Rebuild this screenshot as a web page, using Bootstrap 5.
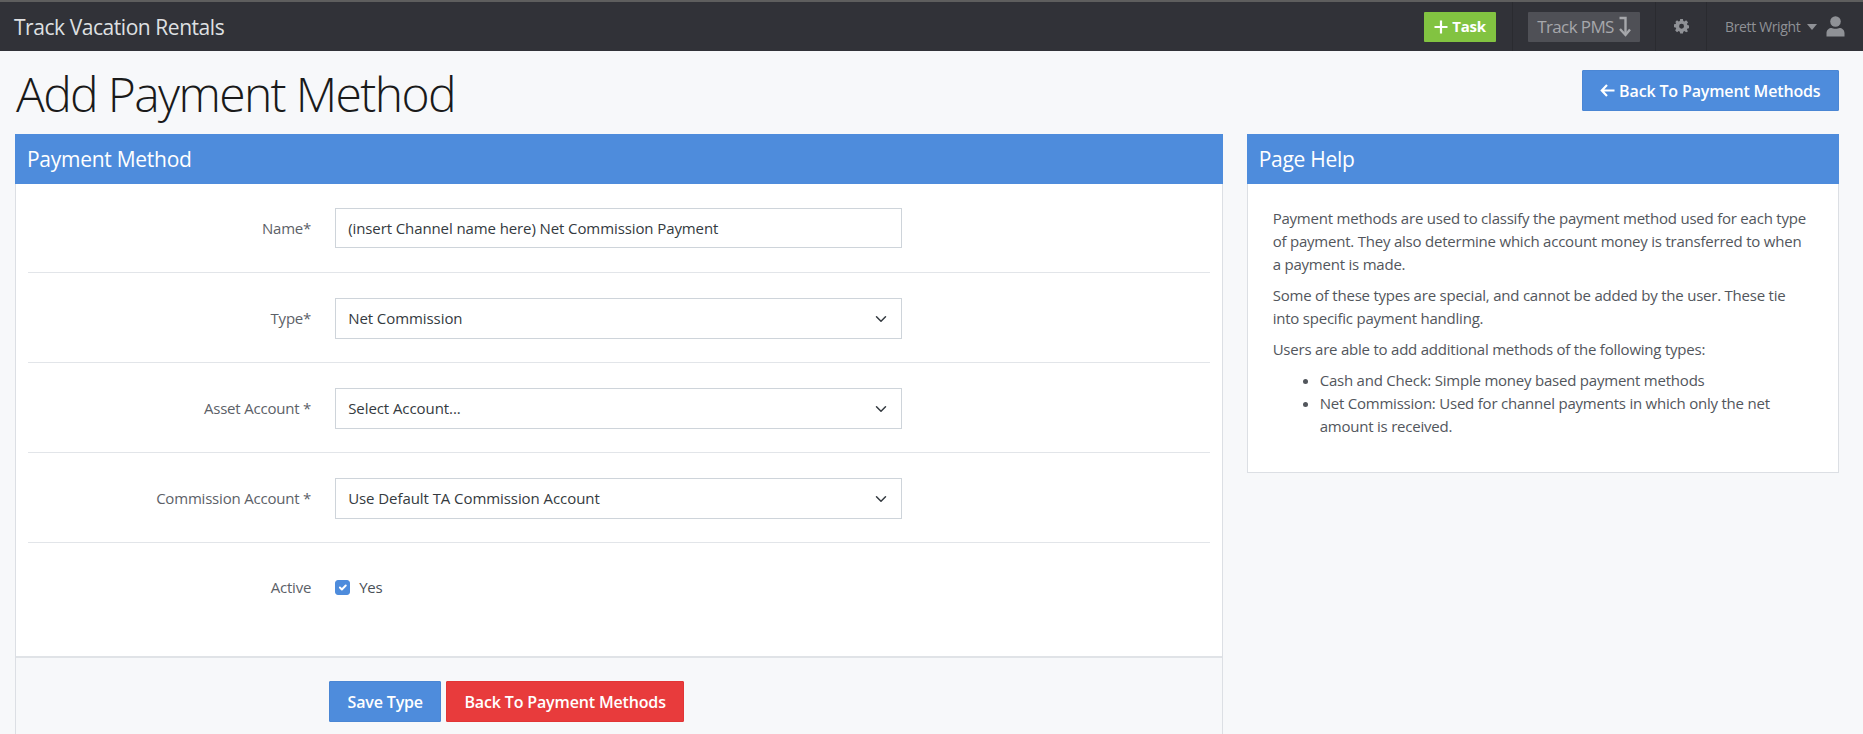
<!doctype html>
<html lang="en">
  <head>
    <meta charset="utf-8">
    <meta name="viewport" content="width=device-width, initial-scale=1">
    <title>Add Payment Method</title>
    <link href="https://cdn.jsdelivr.net/npm/bootstrap@5.3.3/dist/css/bootstrap.min.css" rel="stylesheet">
    <style>
        html, body {
            height: 734px;
            overflow: hidden;
        }

        body {
            background-color: #f7f8fa;
            color: #495057;
            font-family: "Open Sans", "Noto Sans", sans-serif;
            font-size: 15px;
            line-height: 23px;
            letter-spacing: -0.25px;
        }

        .top-bar {
            background-color: #313238;
            border-top: 2px solid #5e5e5e;
            height: 51px;
            padding: 0;
        }

        .top-brand {
            color: #dfe0e2;
            font-size: 21px;
            letter-spacing: -0.45px;
            margin-left: 14px;
            padding-top: 2px;
        }

        .top-section {
            height: 49px;
            border-left: 1px solid #2a2b30;
            display: flex;
            align-items: center;
        }

        .btn-task {
            background-color: #82c341;
            color: #fff;
            font-weight: 700;
            font-size: 15px;
            letter-spacing: -0.3px;
            width: 72px;
            height: 30px;
            border-radius: 1px;
            margin-right: 16px;
            padding: 0;
        }

        .track-box {
            background-color: #4f5056;
            color: #a6a7ab;
            font-size: 17px;
            letter-spacing: -0.6px;
            width: 112px;
            height: 30px;
            border-radius: 1px;
            margin: 0 15px;
            justify-content: center;
        }

        .gear-sec {
            width: 51px;
            justify-content: center;
        }

        .user-sec {
            width: 157px;
            color: #8f9196;
            font-size: 14px;
            letter-spacing: -0.35px;
            padding-left: 18px;
        }

        .caret-icon {
            margin-left: 7px;
        }

        .person-icon {
            margin-left: 9px;
        }

        .page-title {
            font-size: 48px;
            font-weight: 300;
            color: #1a1a1a;
            letter-spacing: -1.65px;
            line-height: 60px;
            margin: 0;
        }

        .title-row {
            padding: 13px 24px 0 16px;
            height: 83px;
        }

        .title-btn {
            margin-top: 6px;
        }

        .btn-blue {
            background-color: #4e8cdc;
            border: 1px solid #4a86d4;
            color: #fff;
            font-weight: 600;
            border-radius: 1px;
            font-size: 16px;
            letter-spacing: -0.15px;
            height: 41px;
            padding: 0 17.5px;
        }

        .btn-red {
            background-color: #e83b3c;
            border: 1px solid #e23536;
            color: #fff;
            font-weight: 600;
            border-radius: 1px;
            font-size: 16px;
            letter-spacing: -0.15px;
            height: 41px;
            padding: 0 17px;
        }

        .page-body {
            padding: 0 24px 0 15px;
        }

        .page-row {
            --bs-gutter-x: 25px;
        }

        .panel-card {
            border-radius: 0;
            border-color: #dcdfe4;
        }

        .help-card {
            margin-left: -1px;
        }

        .panel-head {
            background-color: #4e8cdc;
            color: #fff;
            font-size: 21px;
            height: 50px;
            padding: 0 12px;
            margin: -1px -1px 0;
            display: flex;
            align-items: center;
            letter-spacing: -0.27px;
        }

        .form-area {
            padding: 24px 11.5px 0;
        }

        .form-line {
            border-bottom: 1px solid #e2e5e9;
            padding-bottom: 23px;
            margin-bottom: 25px;
            --bs-gutter-x: 24px;
        }

        .form-line.name-line {
            padding-bottom: 24px;
        }

        .form-line.last-line {
            border-bottom: 0;
            padding-bottom: 0;
            margin-bottom: 0;
            height: 88px;
            padding-top: 3px;
        }

        .form-line label.line-label {
            line-height: 40px;
            color: #5c6168;
            letter-spacing: -0.2px;
        }

        .last-line label.line-label {
            line-height: 33px;
        }

        .form-control, .form-select {
            height: 41px;
            border-radius: 0;
            border-color: #ced4da;
            font-size: 15px;
            letter-spacing: -0.07px;
            color: #343a40;
        }

        .form-control {
            height: 40px;
            letter-spacing: -0.1px;
        }

        .check-wrap {
            padding-top: 6px;
        }

        .check-wrap .form-check {
            padding-left: 24px;
            line-height: 21px;
        }

        .check-wrap .form-check-input {
            width: 15px;
            height: 15px;
            margin-top: 3px;
            margin-left: -24px;
            background-color: #4e8cdc;
            border-color: #4e8cdc;
            border-radius: 3px;
        }

        .panel-foot {
            background-color: #f7f8fa;
            border-top: 2px solid #e0e3e7;
            padding: 23px 0 12px 313px;
            gap: 5px;
        }

        .help-body {
            padding: 23px 26px 26px 25px;
            color: #52565c;
            letter-spacing: -0.22px;
        }

        .help-body p {
            margin-bottom: 8px;
        }

        .help-body ul {
            margin: 0 0 8px;
            padding-left: 47px;
        }
    </style>
  </head>
  <body>
    <nav class="navbar top-bar flex-nowrap">
      <span class="top-brand">Track Vacation Rentals</span>
      <div class="d-flex align-items-center ms-auto">
        <a class="btn btn-task d-flex align-items-center justify-content-center gap-1" href="#">
          <svg width="14" height="14" viewBox="0 0 14 14" fill="none" stroke="#fff" stroke-width="2.2"><path d="M7 0.5V13.5M0.5 7H13.5"/></svg>
          Task
        </a>
        <div class="top-section">
          <div class="track-box d-flex align-items-center gap-1">
            Track PMS
            <svg width="13" height="21" viewBox="0 0 13 21" fill="none" stroke="#a6a7ab" stroke-width="2.4"><path d="M1.500 2H7.500V18"/><path d="M2 13L7.500 19L12 13.500"/></svg>
          </div>
        </div>
        <div class="top-section gear-sec">
          <svg width="15" height="15" viewBox="0 0 16 16" fill="#8f9196"><path fill-rule="evenodd" d="M6.500 0h3l.4 2.100 1.300.6L13 1.500l2.100 2.100-1.200 1.800.6 1.300 2.100.4v3l-2.100.4-.6 1.300 1.200 1.800L13 14.500l-1.800-1.200-1.300.6L9.500 16h-3l-.4-2.100-1.300-.6L3 14.500.9 12.400l1.200-1.800-.6-1.300L-.6 8.900v-3l2.100-.4.6-1.300L.9 3.600 3 1.500l1.800 1.200 1.300-.6zM8 5.300a2.700 2.700 0 1 0 0 5.400 2.700 2.700 0 0 0 0-5.400z" transform="translate(.3 0) scale(.97)"/></svg>
        </div>
        <div class="top-section user-sec">
          <span>Brett Wright</span>
          <svg class="caret-icon" width="10" height="6" viewBox="0 0 10 6" fill="#8f9196"><path d="M0 0H10L5 6Z"/></svg>
          <svg class="person-icon" width="19" height="21" viewBox="0 0 19 21" fill="#8f9196"><circle cx="9.500" cy="5.500" r="5.300"/><path d="M0.500 20.500V17C0.500 14 3 12 5.500 12C7 13 12 13 13.500 12C16 12 18.500 14 18.500 17V20.500Z"/></svg>
        </div>
      </div>
    </nav>

    <div class="title-row d-flex justify-content-between align-items-start">
      <h1 class="page-title">Add Payment Method</h1>
      <a class="btn btn-blue title-btn d-flex align-items-center gap-1" href="#">
        <svg width="15" height="13" viewBox="0 0 15 13" fill="none" stroke="#fff" stroke-width="2.200"><path d="M14.500 6.500H2M7 1L1.800 6.500L7 12"/></svg>
        Back To Payment Methods
      </a>
    </div>

    <div class="page-body">
      <div class="row page-row">
        <div class="col-8">
          <div class="card panel-card border-bottom-0">
            <div class="panel-head">Payment Method</div>
            <form class="form-area">
              <div class="row form-line name-line mx-0">
                <label class="col-3 text-end line-label" for="pmName">Name*</label>
                <div class="col-6"><input id="pmName" type="text" class="form-control" value="(insert Channel name here) Net Commission Payment"></div>
              </div>
              <div class="row form-line mx-0">
                <label class="col-3 text-end line-label" for="pmType">Type*</label>
                <div class="col-6"><select id="pmType" class="form-select"><option>Net Commission</option></select></div>
              </div>
              <div class="row form-line mx-0">
                <label class="col-3 text-end line-label" for="pmAsset">Asset Account *</label>
                <div class="col-6"><select id="pmAsset" class="form-select"><option>Select Account...</option></select></div>
              </div>
              <div class="row form-line mx-0">
                <label class="col-3 text-end line-label" for="pmComm">Commission Account *</label>
                <div class="col-6"><select id="pmComm" class="form-select"><option>Use Default TA Commission Account</option></select></div>
              </div>
              <div class="row form-line last-line mx-0">
                <label class="col-3 text-end line-label">Active</label>
                <div class="col-6 check-wrap">
                  <div class="form-check">
                    <input id="pmActive" class="form-check-input" type="checkbox" checked>
                    <label class="form-check-label" for="pmActive">Yes</label>
                  </div>
                </div>
              </div>
            </form>
            <div class="panel-foot d-flex">
              <button type="button" class="btn btn-blue">Save Type</button>
              <button type="button" class="btn btn-red">Back To Payment Methods</button>
            </div>
          </div>
        </div>
        <div class="col-4">
          <div class="card panel-card help-card">
            <div class="panel-head">Page Help</div>
            <div class="help-body">
              <p>Payment methods are used to classify the payment method used for each type of payment. They also determine which account money is transferred to when a payment is made.</p>
              <p>Some of these types are special, and cannot be added by the user. These tie into specific payment handling.</p>
              <p>Users are able to add additional methods of the following types:</p>
              <ul>
                <li>Cash and Check: Simple money based payment methods</li>
                <li>Net Commission: Used for channel payments in which only the net amount is received.</li>
              </ul>
            </div>
          </div>
        </div>
      </div>
    </div>

    <script src="https://cdn.jsdelivr.net/npm/bootstrap@5.3.3/dist/js/bootstrap.bundle.min.js"></script>
  </body>
</html>
